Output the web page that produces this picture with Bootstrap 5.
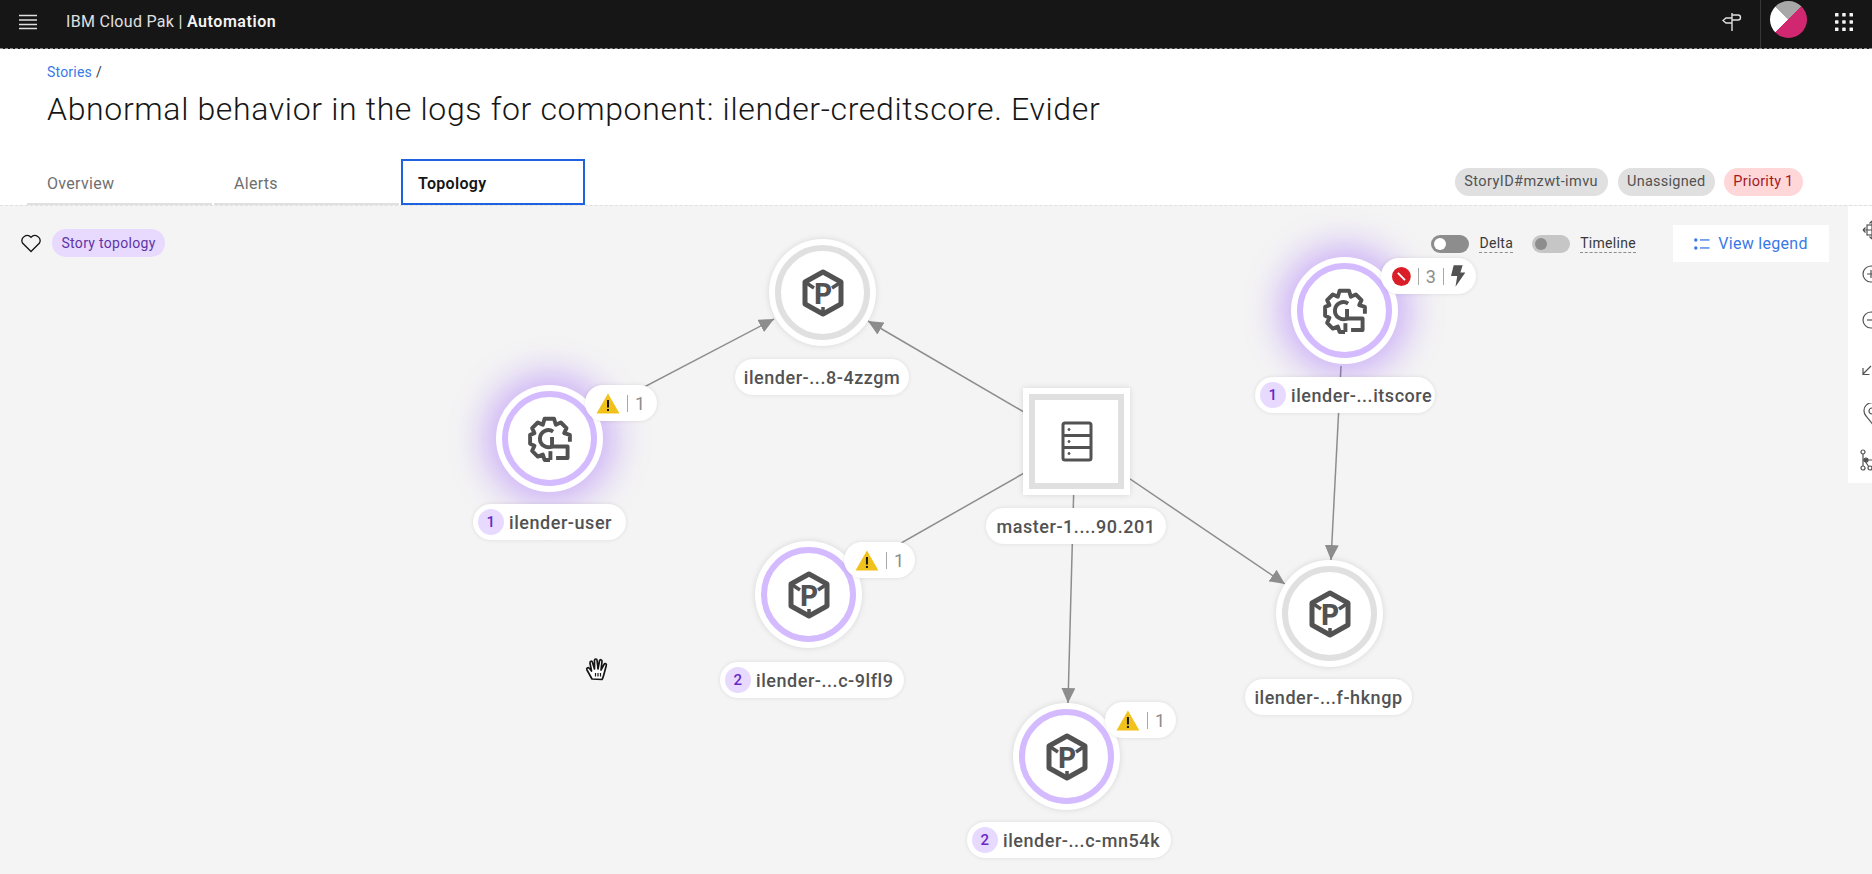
<!DOCTYPE html>
<html lang="en">
<head>
  <meta charset="UTF-8">
  <title>Story topology</title>
  <link rel="stylesheet" href="https://cdn.jsdelivr.net/npm/bootstrap@5.3.0/dist/css/bootstrap.min.css">
  <style>
    body { font-family: "Roboto", "Liberation Sans", sans-serif; height: 874px; overflow: hidden; color: #161616; }
    .top-bar { height: 49px; background: #161616; border-bottom: 1px dashed #8d8d8d; padding: 0 0 4px; flex-wrap: nowrap; }
    .top-menu { margin-left: 18px; }
    .top-brand { margin-left: 28px; font-size: 16px; color: #e0e0e0; letter-spacing: .3px; }
    .top-brand b { font-weight: 600; color: #f4f4f4; letter-spacing: .55px; }
    .top-sign { margin-right: 18px; }
    .top-divider { width: 1px; height: 48px; margin-bottom: -4px; background: #393939; }
    .top-avatar { width: 37px; height: 37px; margin: 0 28px 5px 9px; border-radius: 50%; background: conic-gradient(from 45deg, #d12771 0 180deg, #fff 180deg 270deg, #a8a8a8 270deg 360deg); }
    .top-apps { margin-right: 19px; }
    .page-head { height: 110px; padding: 15px 0 0 47px; }
    .crumbs { font-size: 14px; margin: 0; line-height: 16px; letter-spacing: .2px; }
    .crumbs .breadcrumb-item a { color: #3a78e7; text-decoration: none; }
    .crumbs .breadcrumb-item + .breadcrumb-item { padding-left: 4px; }
    .crumbs .breadcrumb-item + .breadcrumb-item::before { color: #393939; padding-right: 0; }
    .story-title { font-size: 32px; font-weight: 300; line-height: 40px; margin: 9px 0 0; letter-spacing: .65px; white-space: nowrap; }
    .tab-row { height: 46px; padding-left: 27px; padding-right: 69px; }
    .tab-list { gap: 2px; }
    .tab-link { width: 185px; height: 46px; padding: 13px 0 0 20px; font-size: 16px; color: #6f6f6f; border-bottom: 2px solid #e0e0e0; letter-spacing: .3px; }
    .tab-link:hover { color: #6f6f6f; }
    .tab-link.tab-on { width: 184px; padding-left: 15px; padding-top: 11px; color: #161616; font-weight: 600; border: 2px solid #1f62e0; }
    .tag-row { gap: 9px; padding-top: 9px; }
    .tag-pill { height: 28px; padding: 0 9.500px; border-radius: 14px; font-size: 14.500px; line-height: 28px; letter-spacing: .25px; background: #e0e0e0; color: #525252; }
    .tag-mono { letter-spacing: .42px; margin-right: 1px; }
    .tag-red { background: #ffd7d9; color: #a2191f; }
    .tag-violet { background: #e8daff; color: #5e35a5; font-size: 14px; padding: 0 9.500px; letter-spacing: .3px; }
    .canvas-area { height: 669px; background: #f4f4f4; border-top: 1px dashed #e0e0e0; overflow: hidden; }
    .canvas-head { position: absolute; left: 20px; top: 23px; gap: 10px; }
    .canvas-tools { position: absolute; right: 43px; top: 19px; }
    .switch-track { width: 38px; height: 18px; margin-right: 10px; border-radius: 9px; background: #8d8d8d; padding: 3px; }
    .switch-knob { width: 12px; height: 12px; border-radius: 50%; background: #fff; }
    .switch-off { background: #c6c6c6; }
    .switch-off .switch-knob { background: #8d8d8d; }
    .switch-label { font-size: 14px; line-height: 17px; color: #393939; border-bottom: 1px dashed #8d8d8d; letter-spacing: .3px; }
    .switch-gap { margin-right: 19px; }
    .legend-btn { width: 156px; height: 37px; margin-left: 37px; background: #fff; color: #3a78e7; font-size: 16px; border: 0; border-radius: 0; letter-spacing: .3px; padding: 0; }
    .edges { position: absolute; left: 0; top: 0; width: 1872px; height: 669px; }
    .topo-node { position: absolute; width: 107px; height: 107px; background: #fff; border-radius: 50%; padding: 6px; box-shadow: 0 0 6px rgba(0, 0, 0, .12); }
    .topo-node.node-box { border-radius: 0; }
    .node-ring { width: 100%; height: 100%; border: 6px solid #e0e0e0; border-radius: inherit; }
    .node-hit .node-ring { border-color: #d4bbff; }
    .node-glow { box-shadow: 0 0 36px 10px rgba(138, 63, 252, .4); }
    .topo-label { position: absolute; height: 36px; background: #fff; border-radius: 18px; box-shadow: 0 0 4px rgba(0, 0, 0, .1); font-size: 18px; font-weight: 500; color: #525252; letter-spacing: .55px; white-space: nowrap; }
    .label-num { width: 26px; height: 26px; border-radius: 50%; background: #e8daff; color: #6929c4; font-size: 15px; flex-shrink: 0; margin: 0 5px 0 5px; }
    .topo-badge { position: absolute; height: 36px; background: #fff; border-radius: 18px; box-shadow: 0 0 4px rgba(0, 0, 0, .1); font-size: 18px; color: #8d8d8d; padding: 0 11px; gap: 7px; }
    .badge-sep { width: 1px; height: 17px; background: #a8a8a8; }
    .side-tools { position: absolute; right: 0; top: 0; width: 24px; height: 277px; background: #fff; }
    .side-tools svg { position: absolute; left: 14px; }
    .grab-hand { position: absolute; left: 585px; top: 451px; }
  </style>
</head>
<body class="d-flex flex-column">
  <nav class="navbar top-bar">
    <div class="d-flex align-items-center">
      <svg class="top-menu" width="20" height="16" viewBox="0 0 20 16" fill="none" stroke="#e0e0e0" stroke-width="1.6"><path d="M1 1.5h18M1 6h18M1 10.5h18M1 14.5h18"/></svg>
      <span class="top-brand">IBM Cloud Pak | <b>Automation</b></span>
    </div>
    <div class="d-flex align-items-center">
      <svg class="top-sign" width="20" height="20" viewBox="0 0 20 20" fill="none" stroke="#e0e0e0" stroke-width="1.4"><path d="M10 1v18M10 3h6a2.500 2.500 0 0 1 0 5h-6M10 6H4L1 8.500 4 11h6"/></svg>
      <span class="top-divider"></span>
      <span class="top-avatar"></span>
      <svg class="top-apps" width="18" height="18" viewBox="0 0 18 18" fill="#f4f4f4"><rect width="3.500" height="3.500" rx=".6"/><rect x="7.200" width="3.500" height="3.500" rx=".6"/><rect x="14.500" width="3.500" height="3.500" rx=".6"/><rect y="7.200" width="3.500" height="3.500" rx=".6"/><rect x="7.200" y="7.200" width="3.500" height="3.500" rx=".6"/><rect x="14.500" y="7.200" width="3.500" height="3.500" rx=".6"/><rect y="14.500" width="3.500" height="3.500" rx=".6"/><rect x="7.200" y="14.500" width="3.500" height="3.500" rx=".6"/><rect x="14.500" y="14.500" width="3.500" height="3.500" rx=".6"/></svg>
    </div>
  </nav>

  <div class="page-head">
    <ol class="breadcrumb crumbs">
      <li class="breadcrumb-item"><a href="#">Stories</a></li>
      <li class="breadcrumb-item"></li>
    </ol>
    <h1 class="story-title">Abnormal behavior in the logs for component: ilender-creditscore. Evider</h1>
  </div>

  <div class="tab-row d-flex justify-content-between">
    <ul class="nav tab-list">
      <li class="nav-item"><a class="nav-link tab-link" href="#">Overview</a></li>
      <li class="nav-item"><a class="nav-link tab-link" href="#">Alerts</a></li>
      <li class="nav-item"><a class="nav-link tab-link tab-on" href="#">Topology</a></li>
    </ul>
    <div class="tag-row d-flex">
      <span class="tag-pill tag-mono">StoryID#mzwt-imvu</span>
      <span class="tag-pill">Unassigned</span>
      <span class="tag-pill tag-red">Priority 1</span>
    </div>
  </div>

  <div class="canvas-area position-relative" id="canvas">
    <svg class="edges" id="edges" viewBox="0 205 1872 669">
      <defs>
        <marker id="tip" markerWidth="16" markerHeight="14" refX="15" refY="7" orient="auto" markerUnits="userSpaceOnUse">
          <path d="M0 0L15 7L0 14z" fill="#8d8d8d"/>
        </marker>
      </defs>
    </svg>

    <div class="canvas-head d-flex align-items-center">
      <svg width="22" height="20" viewBox="0 0 22 20" fill="none" stroke="#161616" stroke-width="1.3"><path d="M11 18.500L2.500 10A5.200 5.200 0 0 1 11 4.200 5.200 5.200 0 0 1 19.500 10z"/></svg>
      <span class="tag-pill tag-violet">Story topology</span>
    </div>

    <div class="canvas-tools d-flex align-items-center">
      <span class="switch-track"><span class="switch-knob d-block"></span></span>
      <span class="switch-label switch-gap">Delta</span>
      <span class="switch-track switch-off"><span class="switch-knob d-block"></span></span>
      <span class="switch-label">Timeline</span>
      <button class="btn legend-btn d-flex align-items-center justify-content-center gap-2" type="button">
        <svg width="16" height="12" viewBox="0 0 16 12" fill="#3a78e7"><circle cx="1.800" cy="2" r="1.700"/><circle cx="1.800" cy="10" r="1.700"/><rect x="6" y="1.300" width="9.500" height="1.300"/><rect x="6" y="9.300" width="9.500" height="1.300"/></svg>
        View legend
      </button>
    </div>

    <svg class="grab-hand" width="26" height="28" viewBox="0 0 26 28" fill="#fff" stroke="#161616" stroke-width="1.700" stroke-linejoin="round"><path d="M7 22L2 13c-1-2 1-3 2.500-1.500L6.500 14 5 6c-.4-2 2-2.500 2.500-.5L9.500 12 9.500 3.500c0-2 2.500-2 2.600 0L13 12l1.500-8c.4-2 2.800-1.500 2.500.5L16 13l3-5.500c1-1.800 3-.6 2.200 1.200L19 17c-.5 2-1 4-2 5.500z"/><path d="M10.500 16v3.500M13 16v3.500M15.500 16v3.500" fill="none" stroke-width="1.200"/></svg>

    <div class="side-tools">
      <svg style="top:14px" width="20" height="20" viewBox="0 0 20 20" fill="none" stroke="#525252" stroke-width="1.200"><path d="M10 1v18M1 10h18M1 10l2.500-2.500M1 10l2.500 2.500M10 1L7.500 3.500M10 1l2.500 2.500M10 19l-2.500-2.500M10 19l2.500-2.500"/><rect x="5" y="5" width="10" height="10"/></svg>
      <svg style="top:59px" width="20" height="20" viewBox="0 0 20 20" fill="none" stroke="#525252" stroke-width="1.200"><circle cx="9" cy="9" r="8"/><path d="M5 9h8M9 5v8"/></svg>
      <svg style="top:105px" width="20" height="20" viewBox="0 0 20 20" fill="none" stroke="#525252" stroke-width="1.200"><circle cx="9" cy="9" r="8"/><path d="M5 9h8"/></svg>
      <svg style="top:158px" width="12" height="14" viewBox="0 0 12 14" fill="none" stroke="#525252" stroke-width="1.200"><path d="M9 2L1 10M1 4v6.500h6.500"/></svg>
      <svg style="top:197px;left:15px" width="20" height="22" viewBox="0 0 20 22" fill="none" stroke="#525252" stroke-width="1.200"><path d="M9 20.500L3 13a8 8 0 1 1 12 0z"/><circle cx="9" cy="8" r="3"/></svg>
      <svg style="top:243px;left:12px" width="22" height="22" viewBox="0 0 22 22" fill="none" stroke="#525252" stroke-width="1.200"><circle cx="3" cy="3" r="2"/><circle cx="3" cy="19" r="2"/><circle cx="10" cy="19" r="2"/><path d="M3 5v12M3 11h16M5 12l4 6"/><circle cx="6" cy="11" r="2" fill="#525252"/></svg>
    </div>
  </div>

  <script>
    const CANVAS_TOP = 205;

    const ICONS = {
      gear: `<svg width="44" height="46" viewBox="0 0 32 34" fill="none" stroke="#525252" stroke-width="2.900" stroke-linejoin="round">
        <path d="M16 32.500H12L10.700 28.500L7 30L2.800 25.800L4.500 22L1.300 20.500V14L4.500 12.700L2.800 9L7 4.800L10.700 6.500L12 2H19L20.300 6.500L24 4.800L28.200 9L26.500 12.700L30.700 14V19"/>
        <path d="M17.500 22.500A6.300 6.300 0 1 1 18.300 11.500"/>
        <path d="M17.500 15.500V22.500H29V31H20.500"/>
        <path d="M16.300 26V32.500"/>
      </svg>`,
      pod: `<svg width="42" height="48" viewBox="0 0 42 48" fill="none" stroke="#525252" stroke-width="5" stroke-linejoin="round">
        <path d="M21 3L39 13V35L21 45L3 35V13z"/>
        <path d="M3 13l9 6M39 13l-9 6M21 45v-7" stroke-width="3.500"/>
        <text x="21" y="35" text-anchor="middle" font-family="Liberation Mono, monospace" font-weight="700" font-size="31" fill="#525252" stroke="none">P</text>
      </svg>`,
      server: `<svg width="32" height="41" viewBox="0 0 32 41" fill="#525252" stroke="#525252" stroke-width="3">
        <rect x="2" y="2" width="28" height="37" rx="2" fill="none"/>
        <path d="M2 14.500H30M2 26.500H30" fill="none"/>
        <circle cx="8" cy="8.500" r="1" stroke-width="1"/><circle cx="8" cy="20.500" r="1" stroke-width="1"/><circle cx="8" cy="32.500" r="1" stroke-width="1"/>
      </svg>`,
      warn: `<svg width="24" height="21" viewBox="0 0 24 21"><path d="M12 .500L23.500 20.500H.500z" fill="#f1c21b"/><rect x="11" y="7" width="2" height="7.500" fill="#161616"/><rect x="11" y="16" width="2" height="2" fill="#161616"/></svg>`,
      stop: `<svg width="21" height="21" viewBox="0 0 21 21"><circle cx="10.500" cy="10.500" r="10.500" fill="#da1e28"/><path d="M6.500 6.500L14.500 14.500" stroke="#fff" stroke-width="2.200"/></svg>`,
      bolt: `<svg width="16" height="24" viewBox="0 0 16 24"><path d="M3 0H13L10.500 8H16L5 24L7 12H0z" fill="#525252"/></svg>`
    };

    // coordinates are page pixels measured on the screenshot
    const nodes = [
      { kind: "pod", x: 822, y: 291, hit: false, label: "ilender-...8-4zzgm", lx: 735, ly: 358, lw: 174 },
      { kind: "gear", x: 549, y: 437, hit: true, glow: true, num: 1, label: "ilender-user", lx: 473, ly: 503, lw: 153, badge: { x: 585, y: 384, w: 72, icons: ["warn"], count: 1 } },
      { kind: "gear", x: 1344, y: 309, hit: true, glow: true, num: 1, label: "ilender-...itscore", lx: 1255, ly: 376, lw: 180, badge: { x: 1381, y: 257, w: 95, icons: ["stop"], count: 3, extra: "bolt" } },
      { kind: "server", x: 1076, y: 440, box: true, label: "master-1....90.201", lx: 986, ly: 507, lw: 180 },
      { kind: "pod", x: 808, y: 593, hit: true, num: 2, label: "ilender-...c-9lfl9", lx: 720, ly: 661, lw: 184, badge: { x: 844, y: 541, w: 71, icons: ["warn"], count: 1 } },
      { kind: "pod", x: 1329, y: 612, label: "ilender-...f-hkngp", lx: 1245, ly: 678, lw: 167 },
      { kind: "pod", x: 1066, y: 755, hit: true, num: 2, label: "ilender-...c-mn54k", lx: 967, ly: 821, lw: 204, badge: { x: 1105, y: 701, w: 71, icons: ["warn"], count: 1 } }
    ];

    const edges = [
      [585, 417, 774, 318],
      [1077, 442, 868, 320],
      [1077, 442, 808, 595, true],
      [1074, 480, 1068, 702],
      [1077, 442, 1285, 583],
      [1341, 365, 1331, 559]
    ];

    const svg = document.getElementById("edges");
    edges.forEach(([x1, y1, x2, y2, plain]) => {
      const line = document.createElementNS("http://www.w3.org/2000/svg", "line");
      line.setAttribute("x1", x1);
      line.setAttribute("y1", y1);
      line.setAttribute("x2", x2);
      line.setAttribute("y2", y2);
      line.setAttribute("stroke", "#8d8d8d");
      line.setAttribute("stroke-width", "1.500");
      if (!plain) line.setAttribute("marker-end", "url(#tip)");
      svg.appendChild(line);
    });

    const canvas = document.getElementById("canvas");
    const place = (el, x, y, w) => {
      el.style.left = x + "px";
      el.style.top = (y - CANVAS_TOP) + "px";
      if (w) el.style.width = w + "px";
      canvas.appendChild(el);
    };

    nodes.forEach(n => {
      const node = document.createElement("div");
      node.className = "topo-node" + (n.box ? " node-box" : "") + (n.hit ? " node-hit" : "") + (n.glow ? " node-glow" : "");
      node.innerHTML = `<div class="node-ring d-flex align-items-center justify-content-center">${ICONS[n.kind]}</div>`;
      place(node, n.x - 53, n.y - 53);

      const label = document.createElement("div");
      label.className = "topo-label d-flex align-items-center" + (n.num ? "" : " justify-content-center");
      label.innerHTML = (n.num ? `<span class="label-num d-flex align-items-center justify-content-center">${n.num}</span>` : "") + `<span>${n.label}</span>`;
      place(label, n.lx, n.ly, n.lw);

      if (n.badge) {
        const b = n.badge;
        const badge = document.createElement("div");
        badge.className = "topo-badge d-flex align-items-center";
        badge.innerHTML = b.icons.map(i => ICONS[i]).join("") + `<span class="badge-sep"></span><span>${b.count}</span>` +
          (b.extra ? `<span class="badge-sep"></span>${ICONS[b.extra]}` : "");
        place(badge, b.x, b.y, b.w);
      }
    });
  </script>
  <script src="https://cdn.jsdelivr.net/npm/bootstrap@5.3.0/dist/js/bootstrap.bundle.min.js"></script>
</body>
</html>
